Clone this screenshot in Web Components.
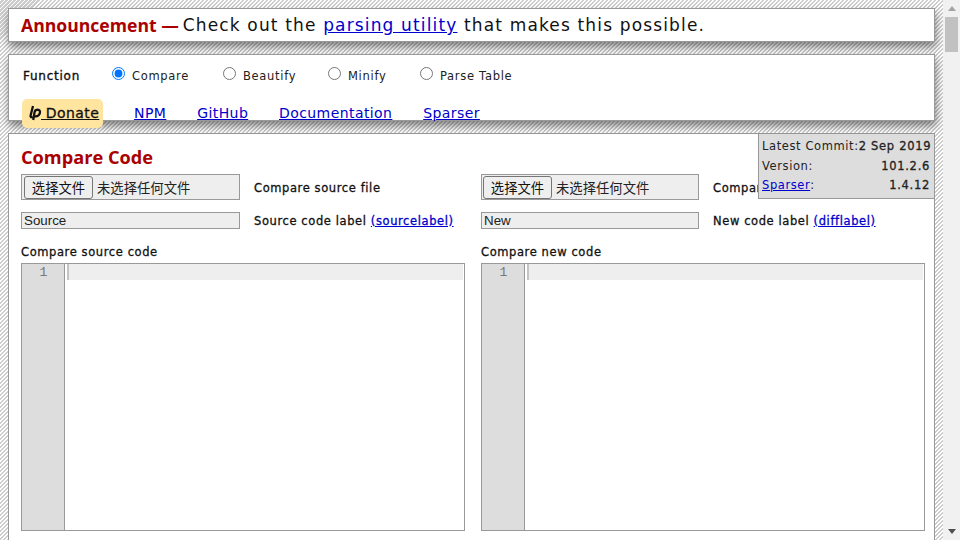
<!DOCTYPE html>
<html lang="en">
<head>
<meta charset="utf-8">
<title>Pretty Diff</title>
<style>
    html, body{
        margin: 0;
        height: 100%;
        overflow: hidden;
    }
    body{
        display: flex;
        background: #efefef;
        font-family: "DejaVu Sans", sans-serif;
    }
</style>
</head>
<body>
<page-shell>
    <announce-bar>Check out the <a href="#">parsing utility</a> that makes this possible.</announce-bar>
    <options-panel></options-panel>
    <compare-panel></compare-panel>
</page-shell>
<fake-scrollbar></fake-scrollbar>

<script>
const linkStyle = `
    a{ color: #00c; text-decoration: underline; }
`;

class PageShell extends HTMLElement{
    constructor(){
        super();
        this.attachShadow({mode : 'open'});
        this.shadowRoot.innerHTML = `
        <style>
            :host{
                display: flex;
                flex-direction: column;
                gap: 12px;
                box-sizing: border-box;
                width: 943px;
                height: 540px;
                overflow: hidden;
                padding: 8px 8px 0 8px;
                background: repeating-linear-gradient(135deg, #fff 0, #fff 1.4px, #ccc 1.4px, #ccc 2.83px);
            }
        </style>
        <slot></slot>`;
    }
}

class AnnounceBar extends HTMLElement{
    constructor(){
        super();
        this.attachShadow({mode : 'open'});
        this.shadowRoot.innerHTML = `
        <style>
            :host{
                display: flex;
                align-items: center;
                gap: 4px;
                box-sizing: border-box;
                height: 34px;
                flex: none;
                padding: 0 12px;
                background: #fff;
                border: 1px solid #999;
                box-shadow: 1px 5px 8px rgba(0,0,0,.45);
                font-size: 17px;
                letter-spacing: 1.15px;
                color: #111;
                white-space: nowrap;
            }
            strong{
                font: 700 17.6px "Open Sans", sans-serif;
                letter-spacing: 0;
                color: #a00;
            }
            ::slotted(a){ color: #00c; }
        </style>
        <strong>Announcement —</strong>
        <span><slot></slot></span>`;
    }
}

class OptionsPanel extends HTMLElement{
    constructor(){
        super();
        this.attachShadow({mode : 'open'});
        this.shadowRoot.innerHTML = `
        <style>
            :host{
                display: block;
                box-sizing: border-box;
                height: 67px;
                flex: none;
                padding: 0 14px;
                background: #fff;
                border: 1px solid #999;
                box-shadow: 1px 5px 8px rgba(0,0,0,.45);
                font-size: 11.5px;
                letter-spacing: .7px;
                color: #222;
                position: relative;
                z-index: 1;
            }
            ${linkStyle}
            .functions{
                display: flex;
                align-items: center;
                height: 20px;
                margin-top: 11px;
            }
            .functions b{
                width: 89px;
                font-weight: normal;
                font-size: 12px;
                letter-spacing: .75px;
                -webkit-text-stroke: .35px #111;
                color: #111;
            }
            label{
                display: flex;
                align-items: center;
                gap: 7px;
                white-space: nowrap;
            }
            label:nth-of-type(1){ width: 111px; }
            label:nth-of-type(2){ width: 105px; }
            label:nth-of-type(3){ width: 92px; }
            input{
                margin: 0;
                width: 13px;
                height: 13px;
                position: relative;
                top: -3px;
            }
            nav{
                display: flex;
                align-items: center;
                gap: 30.8px;
                margin-top: 13px;
                margin-left: -1px;
                font-size: 14px;
                letter-spacing: .42px;
            }
            nav a:not(.donate){ margin-bottom: 2px; }
            .donate{
                display: flex;
                align-items: center;
                box-sizing: border-box;
                height: 29px;
                padding: 0 4px 2px 6px;
                background: #ffe5a0;
                border-radius: 5px;
                color: #111;
                -webkit-text-stroke: .3px #111;
            }
            .donate svg{ flex: none; margin-right: -1px; }
        </style>
        <div class="functions">
            <b>Function</b>
            <label><input type="radio" name="fn" checked>Compare</label>
            <label><input type="radio" name="fn">Beautify</label>
            <label><input type="radio" name="fn">Minify</label>
            <label><input type="radio" name="fn">Parse Table</label>
        </div>
        <nav>
            <a class="donate" href="#">
                <svg width="14" height="16" viewBox="0 0 14 16"><path d="M5 1 2.6 10.4Q2.2 12.4 4.4 12M9.6 4.6Q7.2 4.6 6.6 7L5.2 15M6.4 11.2Q10.2 12.2 11.8 8.4 12.6 4.8 9.6 4.6" fill="none" stroke="#111" stroke-width="2.3"/></svg><span>&nbsp;Donate</span>
            </a>
            <a href="#">NPM</a>
            <a href="#">GitHub</a>
            <a href="#">Documentation</a>
            <a href="#">Sparser</a>
        </nav>`;
    }
}

class ComparePanel extends HTMLElement{
    constructor(){
        super();
        this.attachShadow({mode : 'open'});
        this.shadowRoot.innerHTML = `
        <style>
            :host{
                display: block;
                position: relative;
                box-sizing: border-box;
                flex: none;
                height: 420px;
                padding: 12px 9px 0 12px;
                background: #fff;
                border: 1px solid #999;
                color: #222;
            }
            h2{
                margin: 0 0 6px;
                font: 700 18.2px/22px "Open Sans", sans-serif;
                color: #a00;
            }
            .columns{
                display: grid;
                grid-template-columns: 444px 444px;
                gap: 16px;
            }
        </style>
        <h2>Compare Code</h2>
        <div class="columns">
            <code-column file-label="Compare source file" text-label="Source code label" option="sourcelabel" value="Source" code-label="Compare source code"></code-column>
            <code-column style="--field: 218px; --file-pad: 1px" file-label="Compare new file" text-label="New code label" option="difflabel" value="New" code-label="Compare new code"></code-column>
        </div>
        <version-tag></version-tag>`;
    }
}

class CodeColumn extends HTMLElement{
    constructor(){
        super();
        this.attachShadow({mode : 'open'});
    }
    connectedCallback(){
        const get = name => this.getAttribute(name);
        this.shadowRoot.innerHTML = `
        <style>
            :host{
                display: block;
                font-size: 11.5px;
                letter-spacing: .6px;
            }
            ${linkStyle}
            .row{
                display: flex;
                align-items: center;
                gap: 14px;
                white-space: nowrap;
            }
            .label{
                color: #111;
                -webkit-text-stroke: .3px #111;
            }
            .file + .label{ margin-top: 2px; }
            .label a{ -webkit-text-stroke: .3px #00c; }
            .file{
                display: flex;
                align-items: center;
                gap: 4px;
                box-sizing: border-box;
                width: var(--field, 219px);
                height: 26px;
                flex: none;
                padding-left: var(--file-pad, 2px);
                background: #eee;
                border: 1px solid #999;
                font: 13.33px "Liberation Sans", "Noto Sans CJK SC", sans-serif;
                letter-spacing: 0;
                color: #222;
            }
            .file button{
                box-sizing: border-box;
                width: 69px;
                height: 23px;
                padding: 0;
                background: #efefef;
                border: 1px solid #767676;
                border-radius: 3px;
                font: inherit;
                color: #111;
            }
            .text{
                box-sizing: border-box;
                width: var(--field, 219px);
                height: 17px;
                flex: none;
                padding: 0 2px;
                background: #eee;
                border: 1px solid #999;
                border-radius: 0;
                font: 13.33px "Liberation Sans", sans-serif;
                color: #222;
            }
            .second{ margin-top: 12px; }
            .code-label{ margin: 15px 0 3px; line-height: 16px; }
            .editor{
                display: flex;
                box-sizing: border-box;
                width: 444px;
                height: 268px;
                background: #fff;
                border: 1px solid #999;
            }
            .gutter{
                box-sizing: border-box;
                width: 43px;
                flex: none;
                padding-right: 16px;
                background: #ddd;
                border-right: 1px solid #999;
                text-align: right;
                font: 13px/17px "Liberation Mono", monospace;
                color: #777;
            }
            .lines{ flex: 1; padding: 0 1px 0 2px; }
            .active{
                height: 16px;
                background: #eee;
                box-sizing: border-box;
                border-left: 2px solid #c4c4c4;
            }
        </style>
        <div class="row">
            <div class="file"><button type="button">选择文件</button><span>未选择任何文件</span></div>
            <span class="label">${get('file-label')}</span>
        </div>
        <div class="row second">
            <input class="text" type="text" value="${get('value')}">
            <span class="label">${get('text-label')} <a href="#">(${get('option')})</a></span>
        </div>
        <div class="label code-label">${get('code-label')}</div>
        <div class="editor">
            <div class="gutter">1</div>
            <div class="lines"><div class="active"></div></div>
        </div>`;
    }
}

class VersionTag extends HTMLElement{
    constructor(){
        super();
        this.attachShadow({mode : 'open'});
        this.shadowRoot.innerHTML = `
        <style>
            :host{
                position: absolute;
                top: 0;
                right: 0;
                box-sizing: border-box;
                width: 176px;
                height: 65px;
                padding: 3px 4px 0 3px;
                background: #ddd;
                border-left: 1px solid #999;
                border-bottom: 1px solid #999;
                font-size: 11.5px;
                line-height: 19.5px;
                letter-spacing: .6px;
                color: #222;
            }
            ${linkStyle}
            div{ display: flex; justify-content: space-between; white-space: nowrap; }
            b{ font-weight: normal; -webkit-text-stroke: .3px #222; letter-spacing: .7px; }
        </style>
        <div><span>Latest Commit:</span><b>2 Sep 2019</b></div>
        <div><span>Version:</span><b>101.2.6</b></div>
        <div><span><a href="#">Sparser</a>:</span><b>1.4.12</b></div>`;
    }
}

class FakeScrollbar extends HTMLElement{
    constructor(){
        super();
        this.attachShadow({mode : 'open'});
        this.shadowRoot.innerHTML = `
        <style>
            :host{
                display: flex;
                flex-direction: column;
                align-items: center;
                justify-content: space-between;
                box-sizing: border-box;
                width: 17px;
                height: 540px;
                flex: none;
                padding: 6px 0 6px;
                background: #f1f1f1;
            }
            .thumb{
                width: 13px;
                height: 35px;
                margin-top: 5px;
                background: #c1c1c1;
            }
            .top{ display: flex; flex-direction: column; align-items: center; }
            svg{ display: block; }
        </style>
        <div class="top">
            <svg width="8" height="6" viewBox="0 0 8 6"><path d="M4 0 8 5H0Z" fill="#a3a3a3"/></svg>
            <div class="thumb"></div>
        </div>
        <svg width="8" height="5" viewBox="0 0 8 5"><path d="M0 0H8L4 5Z" fill="#505050"/></svg>`;
    }
}

customElements.define('page-shell', PageShell);
customElements.define('announce-bar', AnnounceBar);
customElements.define('options-panel', OptionsPanel);
customElements.define('compare-panel', ComparePanel);
customElements.define('code-column', CodeColumn);
customElements.define('version-tag', VersionTag);
customElements.define('fake-scrollbar', FakeScrollbar);
</script>
</body>
</html>
